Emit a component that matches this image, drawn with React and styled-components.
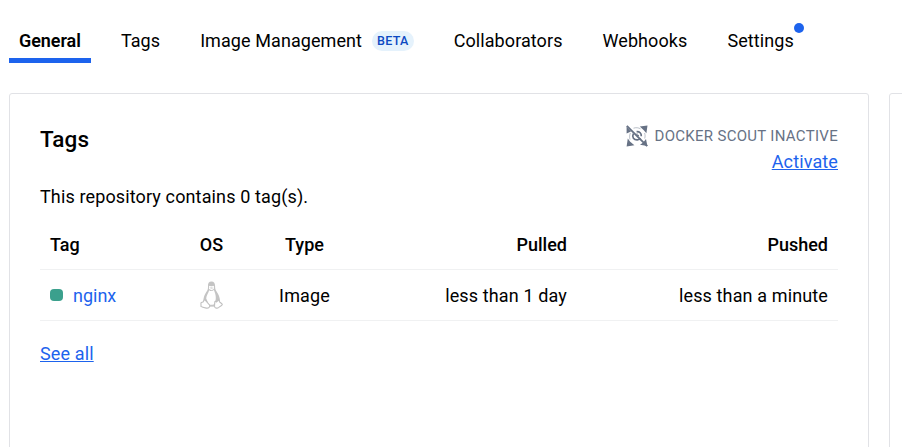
import React from "react";
import styled, { createGlobalStyle } from "styled-components";

const GlobalStyle = createGlobalStyle`
  * { box-sizing: border-box; }
  html, body { margin: 0; background: #fff; overflow: hidden; }
  body { font-family: Roboto, "Liberation Sans", sans-serif; font-size: 18px; color: #000; }
`;

const Page = styled.main`
  height: 447px;
  overflow: hidden;
  padding-left: 9px;
`;

const TabBar = styled.nav`
  display: flex;
  gap: 20px;
  height: 63px;
  padding-top: 18px;
`;

const Tab = styled.a`
  position: relative;
  display: flex;
  flex: none;
  align-items: center;
  gap: 10px;
  height: 45px;
  padding: ${(p) => (p.$active ? "5px 10px 0" : "0 10px")};
  border-bottom: ${(p) => (p.$active ? "5px solid #1d63ed" : "0")};
  font-weight: ${(p) => (p.$active ? 600 : 400)};
  letter-spacing: ${(p) => p.$spacing || "0.08px"};
  white-space: nowrap;
`;

const Beta = styled.span`
  height: 20px;
  padding: 0 5px;
  border-radius: 10px;
  background: #e5f2fc;
  color: #0c49c2;
  font-size: 12.5px;
  font-weight: 500;
  line-height: 20px;
  letter-spacing: 0.3px;
`;

const Dot = styled.span`
  position: absolute;
  top: 5px;
  right: 0;
  width: 10px;
  height: 10px;
  border-radius: 50%;
  background: #1d63ed;
`;

const Panels = styled.div`
  display: grid;
  grid-template-columns: 860px 380px;
  gap: 20px;
  margin-top: 30px;
`;

const Card = styled.section`
  height: 420px;
  padding: 30px;
  border: 1px solid #e1e2e6;
  border-radius: 3px;
`;

const CardHeader = styled.header`
  display: flex;
  justify-content: space-between;
  height: 52px;
`;

const Title = styled.h2`
  margin: 0;
  font-size: 22.5px;
  font-weight: 500;
  line-height: 31px;
  letter-spacing: 0.1px;
`;

const Scout = styled.div`
  display: flex;
  flex-direction: column;
  align-items: flex-end;
`;

const ScoutStatus = styled.div`
  display: flex;
  align-items: center;
  gap: 7px;
  height: 24px;
  margin-bottom: 1px;
  color: #677285;
  font-size: 15px;
  line-height: 20px;
  letter-spacing: 0.3px;
`;

const Link = styled.a`
  color: #1d63ed;
  line-height: 26px;
  letter-spacing: 0.13px;
  text-decoration: underline;
  text-underline-offset: 1px;
  text-decoration-thickness: 1px;
`;

const Summary = styled.p`
  margin: 7px 0 10px;
  line-height: 27px;
  letter-spacing: 0.13px;
`;

const Row = styled.div`
  display: grid;
  grid-template-columns: 140px 63px 123px 211px 261px;
  align-items: center;
  height: ${(p) => (p.$head ? 50 : 51)}px;
  border-bottom: 1px solid #f0f1f2;
  font-weight: ${(p) => (p.$head ? 500 : 400)};
  letter-spacing: ${(p) => (p.$head ? 0 : 0.13)}px;
`;

const Cell = styled.div`
  display: flex;
  align-items: center;
  justify-content: ${(p) => p.$align || "flex-start"};
  gap: 10px;
  padding: 0 10px;
  line-height: 26px;
`;

const Value = styled.span`
  padding-top: 2px;
`;

const TagLink = styled.a`
  padding-top: 2px;
  color: #1d63ed;
  letter-spacing: 0;
`;

const Status = styled.span`
  width: 13px;
  height: 12px;
  border-radius: 4px;
  background: #3ba08d;
`;

const Footer = styled.footer`
  padding-top: 20px;
`;

const ScoutIcon = () => (
  <svg width="22" height="22" viewBox="0 0 22 22" fill="none" stroke="#677285">
    <path d="M13.8 1.6 21.5.6 20.4 8.2 17.8 5.2zM.6 21.4 1.8 13.6l2.4 3.2 4.2 3.4zM21.4 21l-7.4-1.2 3.2-2.3 2.8-3.6zM.6 1.8v6.6l4.4-2z" fill="#677285" stroke="none" />
    <path d="M7.5 3.2c2.6-.9 5-.5 7 .6M4 14.6c-.7-2.4-.5-4.6.4-6.6M18.6 8c.6 1.8.6 3.8.1 5.5" strokeWidth="0.7" opacity="0.65" />
    <path d="M7.4 8.7c-1.8 3.4.5 6.4 4 6.2 1.4-.1 2.4-.7 3.1-1.6M10.6 6.6c3-.2 4.9 1.7 4.7 4.6" strokeWidth="1.7" />
    <path d="M11 8.4v2h2" strokeWidth="1" />
    <path d="m.8.8 20.4 20.4" strokeWidth="1.9" />
  </svg>
);

const LinuxIcon = () => (
  <svg width="23" height="28" viewBox="0 0 23 28">
    <path d="M11.5.5C8.8.5 7.8 2.5 8 5.3c.1 2.5-.3 3.9-1.7 5.8-2 2.8-2.7 5.8-3 8.5L7 25.5h9l4-5.8c-.2-3.4-1.4-6.2-3.1-8.6-1.5-2.1-1.8-3.3-1.8-5.8 0-3.1-1.1-4.8-3.6-4.8Z" fill="#c4c4c4" />
    <path d="M9.2 9.2c1.3 1.2 3.3 1.1 4.7-.1 1.1 2.8 1.9 4.8 1.9 7.6 0 2.5-.6 4.7-1.9 6.7-2.1.8-3.6.8-5 0L6.2 17.5c.1-2.8 2-5.4 3-8.3Z" fill="#fff" />
    <path d="M9 5.2c.6-.7 1.2-.7 1.8 0h1.4c.6-.8 1.3-.7 1.8.1l-.1 2.8-2.3 1.2L9 8Z" fill="#fff" />
    <path d="M9.2 6.8 11.4 6l2.4.9-2.2 1.2Z" fill="#dedede" />
    <path d="M4.8 18.6 9.5 24c.8 2-.8 3.5-3.2 3.1C4.2 26.7 2.1 26.3.9 25.4c.4-1.4-.3-2.6.2-3.7.7-.5 1.8-.3 2.3-1.1.4-.8.5-1.6 1.4-2ZM18.5 18.8c.8.4.5 1.7 1.4 2.4 1.1 1 2.3 1.6 2.4 2.4-.5 1.2-2.4 1.6-3.5 2.7-1.4 1.3-3.4 1-4.1-.4-.5-1.4.2-3.3.1-5.1.4-.8 1.1-.5 1.7.2.9-.3 1.3-1.3 2-2.2Z" fill="#fff" stroke="#c0c0c0" strokeWidth="1.1" />
    <path d="M9.3 24.5h5.2" stroke="#c6c6c6" strokeWidth="1.5" />
  </svg>
);

export default function App() {
  return (
    <Page>
      <GlobalStyle />
      <TabBar>
        <Tab $active $spacing="-0.05px">General</Tab>
        <Tab>Tags</Tab>
        <Tab>Image Management <Beta>BETA</Beta></Tab>
        <Tab>Collaborators</Tab>
        <Tab>Webhooks</Tab>
        <Tab>Settings<Dot /></Tab>
      </TabBar>
      <Panels>
        <Card>
          <CardHeader>
            <Title>Tags</Title>
            <Scout>
              <ScoutStatus><ScoutIcon />DOCKER SCOUT INACTIVE</ScoutStatus>
              <Link>Activate</Link>
            </Scout>
          </CardHeader>
          <Summary>This repository contains 0 tag(s).</Summary>
          <Row $head>
            <Cell>Tag</Cell>
            <Cell $align="center">OS</Cell>
            <Cell $align="center">Type</Cell>
            <Cell $align="flex-end">Pulled</Cell>
            <Cell $align="flex-end">Pushed</Cell>
          </Row>
          <Row>
            <Cell><Status /><TagLink>nginx</TagLink></Cell>
            <Cell $align="center"><LinuxIcon /></Cell>
            <Cell $align="center"><Value>Image</Value></Cell>
            <Cell $align="flex-end"><Value>less than 1 day</Value></Cell>
            <Cell $align="flex-end"><Value>less than a minute</Value></Cell>
          </Row>
          <Footer><Link>See all</Link></Footer>
        </Card>
        <Card />
      </Panels>
    </Page>
  );
}
